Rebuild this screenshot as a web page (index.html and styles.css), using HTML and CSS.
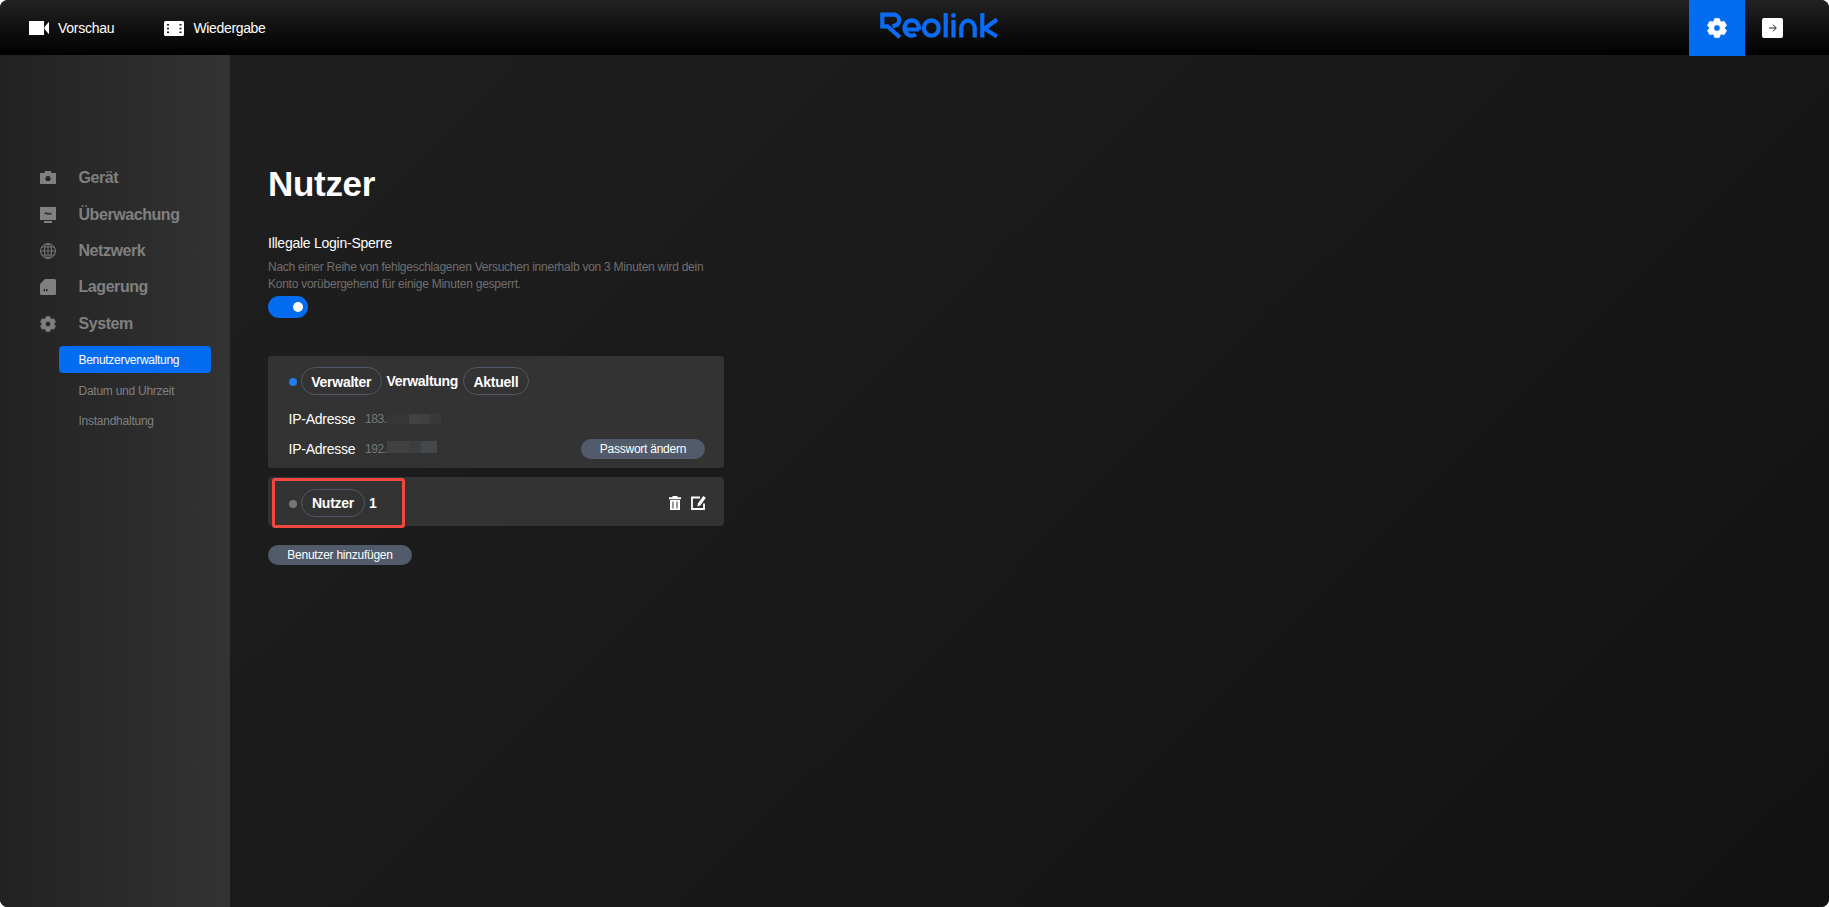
FILE: index.html
```html
<!DOCTYPE html>
<html lang="de">
	<head>
		<meta charset="UTF-8">
		<title>Reolink</title>
		<link rel="stylesheet" href="styles.css">
	</head>
	<body>
<svg class="defs">
	<symbol id="gear" viewBox="0 0 20 20">
		<path fill-rule="evenodd" d="M7.7 0.6h4.6l0.8 2.5 1.5 0.9 2.6-0.6 2.3 4-1.8 1.9v1.4l1.8 1.9-2.3 4-2.6-0.6-1.5 0.9-0.8 2.5H7.7l-0.8-2.5-1.5-0.9-2.6 0.6-2.3-4 1.8-1.9V9.3L0.5 7.4l2.3-4 2.6 0.6 1.5-0.9zM10 6.7a3.3 3.3 0 1 0 0 6.6 3.3 3.3 0 0 0 0-6.6z" stroke="currentColor" stroke-width="0.8" stroke-linejoin="round"/>
	</symbol>
</svg>
<div class="app">
	<header>
		<nav>
			<a class="preview" href="#"><svg width="20" height="14" viewBox="0 0 20 14"><path d="M0 0h15v14H0zM15.5 6L20 0.8v12.4L15.5 8z"/></svg><span>Vorschau</span></a>
			<a class="playback" href="#"><svg width="20" height="15" viewBox="0 0 20 15"><path fill-rule="evenodd" d="M1.500 0h17A1.500 1.500 0 0 1 20 1.500v12a1.500 1.500 0 0 1-1.500 1.500h-17A1.500 1.500 0 0 1 0 13.500v-12A1.500 1.500 0 0 1 1.500 0zM3 3v1.500h2V3zM3 6.700v1.500h2V6.700zM3 10.400v1.500h2v-1.500zM15.500 3v1.500h2V3zM15.500 6.700v1.500h2V6.700zM15.500 10.400v1.500h2v-1.500z"/></svg><span>Wiedergabe</span></a>
		</nav>
		<!-- logo -->
		<svg class="logo line" width="120" height="27" viewBox="0 0 120 27" stroke="#0b6bf5" stroke-width="4.200">
			<path d="M12.500 14.300L15.200 13.500A5.500 5.500 0 0 0 14 2.700H2.300V14.300H7.500L19.800 25.200"/>
			<path d="M25 17.500h14M38.800 17.500a7.200 7.600 0 1 0-3 4.800"/>
			<ellipse cx="51.300" cy="16" rx="7.400" ry="7.700"/>
			<path d="M65.700 1V25.600M73.500 8V25.600M81.300 25.600v-9.500a6.700 7.500 0 0 1 13.400 0v9.500M102.300 1V25.600M117 7.500l-12.500 9.200L117 24.500"/>
			<circle cx="73.500" cy="3.400" r="2.400" fill="#0b6bf5" stroke="none"/>
		</svg>
		<div class="tools">
			<a class="on" href="#"><svg width="20" height="20"><use href="#gear"/></svg></a>
			<a href="#"><svg width="21" height="20" viewBox="0 0 21 20"><rect width="21" height="20" rx="2"/><path d="M7 10h7M11 6.700l3.300 3.300-3.300 3.300" fill="none" stroke="#222" stroke-width="1"/></svg></a>
		</div>
	</header>
	<div class="content">
		<aside>
			<ul class="menu">
				<li><svg width="16" height="16" viewBox="0 0 16 16"><path fill-rule="evenodd" d="M0 3h4l1.300-2h5.400l1.300 2h4V14H0zM8 5.900a2.600 2.600 0 1 0 0 5.200 2.600 2.600 0 0 0 0-5.200z"/></svg><span>Gerät</span></li>
				<li><svg width="16" height="16" viewBox="0 0 16 16"><path d="M0 0h16v13H0zM4 14h8v2H4z"/><path d="M4.500 7l2-1.200 1.500 1.600 1.500-1.200 2 1.200" fill="none" stroke="#292929" stroke-width="1.300"/></svg><span>Überwachung</span></li>
				<li><svg class="line" width="16" height="16" viewBox="0 0 16 16" stroke="currentColor"><circle cx="8" cy="8" r="7.400"/><ellipse cx="8" cy="8" rx="3.600" ry="7.400"/><path d="M8 0.600v14.800M0.600 8h14.800M1.800 4h12.400M1.800 12h12.400" stroke-width="0.800"/></svg><span>Netzwerk</span></li>
				<li><svg width="16" height="16" viewBox="0 0 16 16"><path fill-rule="evenodd" d="M5 0h9.500A1.500 1.500 0 0 1 16 1.500v13a1.500 1.500 0 0 1-1.500 1.500h-13A1.500 1.500 0 0 1 0 14.500V5zM3.500 10v2.300H5V10zM6 10v2.300h1.500V10z"/></svg><span>Lagerung</span></li>
				<li><svg width="16" height="16"><use href="#gear"/></svg><span>System</span></li>
			</ul>
			<ul class="submenu">
				<li class="on">Benutzerverwaltung</li>
				<li>Datum und Uhrzeit</li>
				<li>Instandhaltung</li>
			</ul>
		</aside>
		<main>
			<h1>Nutzer</h1>
			<h2>Illegale Login-Sperre</h2>
			<p>Nach einer Reihe von fehlgeschlagenen Versuchen innerhalb von 3 Minuten wird dein<br>Konto vorübergehend für einige Minuten gesperrt.</p>
			<div class="switch"></div>
			<section class="card admin">
				<div class="name"><i class="dot online"></i><b class="pill w1">Verwalter</b><b class="user">Verwaltung</b><b class="pill w2">Aktuell</b></div>
				<div class="ip"><label>IP-Adresse</label><span>183.</span><i class="mask m1"></i></div>
				<div class="ip"><label>IP-Adresse</label><span>192.</span><i class="mask m2"></i><a class="btn pass" href="#">Passwort ändern</a></div>
			</section>
			<section class="card guest">
				<div class="name"><i class="dot"></i><b class="pill w3">Nutzer</b><b class="user">1</b></div>
				<div class="actions">
					<svg width="12" height="14" viewBox="0 0 12 14"><path fill-rule="evenodd" d="M0 1.200h3.500V0h5v1.200H12v2H0zM1 3.900h10V14H1zM3.500 5.500v7h1v-7zM7.500 5.500v7h1v-7z"/></svg>
					<svg width="15" height="14" viewBox="0 0 15 14"><path d="M9 1.500H1V13h12V7.500" fill="none" stroke="#fff" stroke-width="1.800"/><path d="M12.300 0l2.500 1.700-5.300 7.500-3.200 1.500 0.700-3.400z"/></svg>
				</div>
				<div class="frame"></div>
			</section>
			<a class="btn add" href="#">Benutzer hinzufügen</a>
		</main>
	</div>
</div>
	</body>
</html>
```
FILE: styles.css
```css
* {margin:0; padding:0; box-sizing:border-box;}
li{list-style:none;}
a{text-decoration:none; color:#fff;}
svg{display:block; fill:currentColor; flex:none;}
.line{fill:none;}
i{font-style:normal;}
body{background:#fff; font-family:"Liberation Sans", Arial, sans-serif; color:#fff; font-size:14px; letter-spacing:-0.25px; overflow:hidden;}
.defs{display:none;}
.app{width:100vw; height:100vh; display:flex; flex-direction:column; border-radius:8px; overflow:hidden; background:#1c1c1c;}

header{height:55px; flex:none; display:flex; align-items:center; justify-content:space-between; position:relative; background:linear-gradient(#222, #000);}
nav{display:flex; padding-left:29px;}
nav a{display:flex; align-items:center; height:20px; margin-top:1px;}
nav span{line-height:20px;}
.preview{width:135px; gap:9px;}
.playback{gap:9.500px; letter-spacing:-0.35px;}
.logo{position:absolute; left:880px; top:12px;}
.tools{display:flex; height:56px; align-self:flex-start; position:relative;}
.tools a{width:56px; display:flex; align-items:center; justify-content:center;}
.tools .on{background:#046cf0;}
.tools a:last-child{width:84px; padding-right:29px;}

.content{flex:1; display:flex; background:linear-gradient(135deg, #202020, #121212);}
aside{width:229.5px; flex:none; padding-top:105px; background:linear-gradient(90deg, #222, #333); color:#808080;}
.menu li{height:36.4px; display:flex; align-items:center; padding-left:40px; gap:22.5px; font-size:16px; font-weight:bold;}
.menu span{letter-spacing:-0.43px;}
.submenu{margin-top:4px; padding-left:59px;}
.submenu li{width:152px; height:27px; line-height:29px; padding-left:19.500px; margin-bottom:3.700px; font-size:12px; border-radius:4px;}
.submenu .on{background:#046cf0; color:#fff; letter-spacing:-0.3px;}

main{padding:104px 0 0 38.500px;}
h1{font-size:35px; line-height:50px; letter-spacing:-0.3px;}
h2{font-size:14px; font-weight:normal; line-height:20px; margin-top:24px;}
p{font-size:12px; line-height:17px; color:#6f6f6f; margin-top:6px;}
.switch{width:40px; height:22px; border-radius:11px; background:#046cf0; padding:6px 5px 0 25px; margin-top:3px;}
.switch::after{content:""; display:block; width:10px; height:10px; border-radius:50%; background:#fff;}

.card{width:456px; border-radius:4px; background:#333; padding-left:20.500px; position:relative;}
.admin{height:112px; margin-top:38px; padding-top:11px;}
.name{display:flex; align-items:center; height:28px;}
.dot{width:8px; height:8px; border-radius:50%; background:#777; margin-right:4.500px; margin-top:2px;}
.pill{height:28px; line-height:26px; border:1px solid #4e5866; border-radius:14px; text-align:center;}
.online{background:#1f7ff0;}
.w1{width:80.500px;}
.w2{width:66px;}
.w3{width:64px;}
.user{line-height:28px; margin:0 5px; letter-spacing:-0.33px;}
.guest .user{margin-left:4px;}
.admin .pill{line-height:28px;}
.admin .user{line-height:30px;}
.guest .pill{line-height:27px;}
.ip{display:flex; align-items:center; height:30px;}
.admin .name{margin-bottom:9px;}
.ip label{width:76.500px;}
.ip span{color:#777; font-size:12px; width:22px; letter-spacing:-0.4px;}
.mask{height:10px; width:54px; background:linear-gradient(90deg, #363636 40%, #424242 40%, #424242 62%, #3e3f40 62%, #3e3f40 80%, #393939 80%);}
.m2{height:12px; width:50px; margin-bottom:4px; background:linear-gradient(90deg, #404142 45%, #3b3d3e 45%, #3b3d3e 68%, #45484b 68%);}
.btn{display:block; border-radius:10px; background:#515b6a; font-size:12px; line-height:20px; height:20px; text-align:center;}
.pass{width:124px; margin-left:auto; margin-right:19px;}
.guest{height:49px; margin-top:9px; padding-top:2px; display:flex; align-items:center; justify-content:space-between; padding-right:18px;}
.actions{display:flex; gap:10px; margin-top:1px;}
.frame{position:absolute; left:3.500px; top:1px; width:133px; height:50px; border:3px solid #f2473f; border-radius:3px;}
.add{width:144px; margin-top:19px; line-height:21px;}
```
